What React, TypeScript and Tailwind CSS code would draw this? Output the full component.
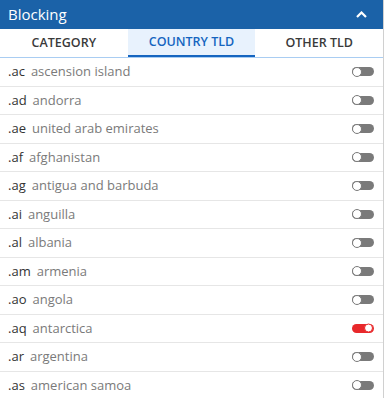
import React from "react";

const rows: [string, string, boolean][] = [
  [".ac", "ascension island", false],
  [".ad", "andorra", false],
  [".ae", "united arab emirates", false],
  [".af", "afghanistan", false],
  [".ag", "antigua and barbuda", false],
  [".ai", "anguilla", false],
  [".al", "albania", false],
  [".am", "armenia", false],
  [".ao", "angola", false],
  [".aq", "antarctica", true],
  [".ar", "argentina", false],
  [".as", "american samoa", false],
];

function Toggle({ on }: { on: boolean }) {
  return on ? (
    <div className="relative w-[22px] h-[9px] rounded-full bg-[#e8282b]">
      <div className="absolute right-[1px] top-1/2 -translate-y-1/2 w-[9px] h-[9px] rounded-full bg-white border border-[#e8282b]" />
    </div>
  ) : (
    <div className="relative w-[22px] h-[9px] rounded-full bg-[#7a7a7a]">
      <div className="absolute left-0 top-1/2 -translate-y-1/2 w-[10px] h-[10px] rounded-full bg-white border border-[#7a7a7a]" />
    </div>
  );
}

export default function App() {
  return (
    <div
      className="w-[384px] h-[398px] overflow-hidden bg-white border-r border-[#d0d0d0]"
      style={{ fontFamily: '"Open Sans", "Noto Sans", sans-serif' }}
    >
      <div className="h-[29px] bg-[#1b62a8] flex items-center justify-between pl-[8px] pr-[16px]">
        <span className="text-white text-[15px] leading-none">Blocking</span>
        <svg width="11" height="7" viewBox="0 0 11 7">
          <path d="M1 6 L5.5 1.5 L10 6" stroke="white" strokeWidth="2.2" fill="none" />
        </svg>
      </div>
      <div className="grid grid-cols-3 h-[29px] border-b border-[#a9cdf2]">
        <div className="flex items-center justify-center text-[12.5px] font-semibold text-[#3a3a3a]">CATEGORY</div>
        <div className="flex items-center justify-center text-[12.5px] font-semibold text-[#1565c0] bg-[#e8f2fd] border-b-2 border-[#1565c0]">
          COUNTRY TLD
        </div>
        <div className="flex items-center justify-center text-[12.5px] font-semibold text-[#3a3a3a]">OTHER TLD</div>
      </div>
      {rows.map(([code, name, on]) => (
        <div
          key={code}
          className="h-[28.5px] flex items-center justify-between pl-[8px] pr-[9px] border-b border-[#e6e6e6]"
        >
          <div className="flex items-center gap-[6px] text-[13px]">
            <span className="text-[#333]">{code}</span>
            <span className="text-[#7a7a7a]">{name}</span>
          </div>
          <Toggle on={on} />
        </div>
      ))}
    </div>
  );
}
